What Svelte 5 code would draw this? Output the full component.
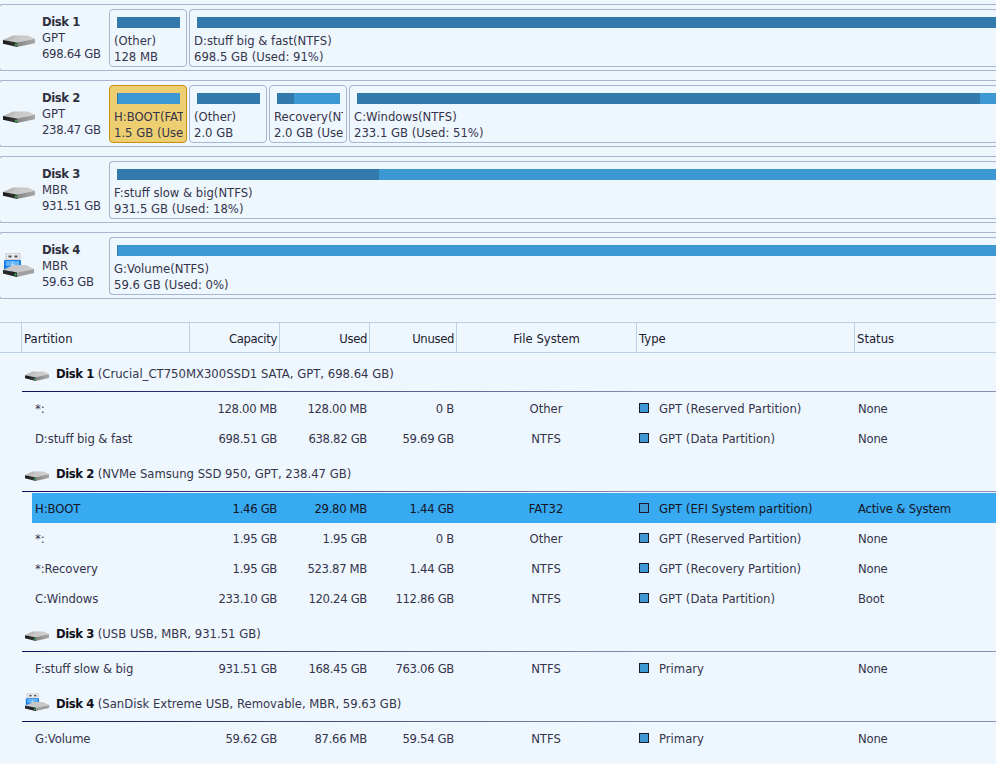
<script>
  const disks = [
    { name: 'Disk 1', scheme: 'GPT', size: '698.64 GB', usb: false, parts: [
      { grow: false, l1: '(Other)', l2: '128 MB', used: 100 },
      { grow: true, l1: 'D:stuff big & fast(NTFS)', l2: '698.5 GB (Used: 91%)', used: 100 }
    ]},
    { name: 'Disk 2', scheme: 'GPT', size: '238.47 GB', usb: false, parts: [
      { grow: false, sel: true, l1: 'H:BOOT(FAT32)', l2: '1.5 GB (Used: 2%)', px: 1 },
      { grow: false, l1: '(Other)', l2: '2.0 GB', used: 100 },
      { grow: false, l1: 'Recovery(NTFS)', l2: '2.0 GB (Used: 27%)', px: 17 },
      { grow: true, l1: 'C:Windows(NTFS)', l2: '233.1 GB (Used: 51%)', px: 623 }
    ]},
    { name: 'Disk 3', scheme: 'MBR', size: '931.51 GB', usb: false, parts: [
      { grow: true, l1: 'F:stuff slow & big(NTFS)', l2: '931.5 GB (Used: 18%)', px: 262 }
    ]},
    { name: 'Disk 4', scheme: 'MBR', size: '59.63 GB', usb: true, parts: [
      { grow: true, l1: 'G:Volume(NTFS)', l2: '59.6 GB (Used: 0%)', px: 1 }
    ]}
  ];
  const groups = [
    { name: 'Disk 1', info: '(Crucial_CT750MX300SSD1 SATA, GPT, 698.64 GB)', usb: false, rows: [
      ['*:', '128.00 MB', '128.00 MB', '0 B', 'Other', 'GPT (Reserved Partition)', 'None'],
      ['D:stuff big & fast', '698.51 GB', '638.82 GB', '59.69 GB', 'NTFS', 'GPT (Data Partition)', 'None']
    ]},
    { name: 'Disk 2', info: '(NVMe Samsung SSD 950, GPT, 238.47 GB)', usb: false, rows: [
      ['H:BOOT', '1.46 GB', '29.80 MB', '1.44 GB', 'FAT32', 'GPT (EFI System partition)', 'Active & System', true],
      ['*:', '1.95 GB', '1.95 GB', '0 B', 'Other', 'GPT (Reserved Partition)', 'None'],
      ['*:Recovery', '1.95 GB', '523.87 MB', '1.44 GB', 'NTFS', 'GPT (Recovery Partition)', 'None'],
      ['C:Windows', '233.10 GB', '120.24 GB', '112.86 GB', 'NTFS', 'GPT (Data Partition)', 'Boot']
    ]},
    { name: 'Disk 3', info: '(USB USB, MBR, 931.51 GB)', usb: false, rows: [
      ['F:stuff slow & big', '931.51 GB', '168.45 GB', '763.06 GB', 'NTFS', 'Primary', 'None']
    ]},
    { name: 'Disk 4', info: '(SanDisk Extreme USB, Removable, MBR, 59.63 GB)', usb: true, rows: [
      ['G:Volume', '59.62 GB', '87.66 MB', '59.54 GB', 'NTFS', 'Primary', 'None']
    ]}
  ];
</script>

{#snippet hdd(cls)}
  <svg class={cls} viewBox="0 0 32 13" preserveAspectRatio="none" aria-hidden="true">
    <defs>
      <linearGradient id="hddtop" x1="0" x2="1" y1="0" y2="0.3">
        <stop offset="0" stop-color="#a4a4a4" />
        <stop offset="0.5" stop-color="#c6c6c6" />
        <stop offset="1" stop-color="#d2d2d2" />
      </linearGradient>
      <linearGradient id="hddfront" x1="0" x2="1" y1="0" y2="0">
        <stop offset="0" stop-color="#161616" />
        <stop offset="0.42" stop-color="#3a3a3a" />
        <stop offset="0.47" stop-color="#888888" />
        <stop offset="1" stop-color="#a8a8a8" />
      </linearGradient>
    </defs>
    <polygon points="0,5.5 10,0.5 25,0.5 32,4 14,8" fill="url(#hddtop)" />
    <polygon points="0,5.5 14,8 32,4 32,9 14,13 0,9.5" fill="url(#hddfront)" />
    <rect x="12" y="9.5" width="2" height="2" fill="#2fc24f" />
  </svg>
{/snippet}

{#snippet usb(cls)}
  <svg class={cls} viewBox="0 0 32 24" preserveAspectRatio="none" aria-hidden="true">
    <rect x="3" y="0" width="14" height="7" rx="1" fill="#ebebef" stroke="#a6a6b0" stroke-width="0.6" />
    <rect x="5.5" y="2.5" width="3" height="2" fill="#555" />
    <rect x="11.5" y="2.5" width="3" height="2" fill="#555" />
    <rect x="1" y="7" width="17" height="12" rx="1" fill="#1c7ee8" />
    <rect x="3" y="8" width="13" height="5" fill="#62b3f6" />
    <path d="M9.5 8.5v7M7.5 11l2 1.5 2-1.5" stroke="#c4e2ff" stroke-width="0.8" fill="none" />
    <polygon points="0,17 10,12 23,12 31,16 14,19.5" fill="#c8c8c8" />
    <polygon points="0,17 14,19.5 31,16 31,20 14,24 0,20.5" fill="#a0a0a0" />
    <polygon points="0,17 14,19.5 14,24 0,20.5" fill="#262626" />
    <rect x="11.5" y="20.5" width="2" height="2" fill="#2fc24f" />
  </svg>
{/snippet}

<div class="page">
  <section class="map">
    {#each disks as d}
      <div class="disk">
        <div class="diskinfo">
          <span class="iconslot">
            {#if d.usb}{@render usb('mapusb')}{:else}{@render hdd('maphdd')}{/if}
          </span>
          <div class="disktext">
            <b>{d.name}</b>
            <span>{d.scheme}</span>
            <span class="size">{d.size}</span>
          </div>
        </div>
        <div class="parts">
          {#each d.parts as p}
            <div class="part" class:grow={p.grow} class:sel={p.sel}>
              <div class="bar">
                <div class="fill" style:width={p.px ? p.px + 'px' : p.used + '%'}></div>
              </div>
              <div class="ptext">{p.l1}</div>
              <div class="ptext">{p.l2}</div>
            </div>
          {/each}
        </div>
      </div>
    {/each}
  </section>

  <section class="table">
    <div class="thead cols">
      <div class="gutter"></div>
      <div class="th">Partition</div>
      <div class="th r">Capacity</div>
      <div class="th r">Used</div>
      <div class="th r">Unused</div>
      <div class="th c">File System</div>
      <div class="th">Type</div>
      <div class="th last">Status</div>
    </div>
    {#each groups as g}
      <div class="ghead">
        <span class="gicon">
          {#if g.usb}{@render usb('listusb')}{:else}{@render hdd('listhdd')}{/if}
        </span>
        <b>{g.name}</b>
        <span class="ginfo">{g.info}</span>
      </div>
      <div class="rows">
        {#each g.rows as r}
          <div class="row" class:selrow={r[7]}>
            <div class="td name">{r[0]}</div>
            <div class="td r">{r[1]}</div>
            <div class="td r">{r[2]}</div>
            <div class="td r">{r[3]}</div>
            <div class="td c">{r[4]}</div>
            <div class="td type"><i class="sq"></i>{r[5]}</div>
            <div class="td status">{r[6]}</div>
          </div>
        {/each}
      </div>
    {/each}
  </section>
</div>

<style>
  :global(body) {
    margin: 0;
    background: #eff7fe;
  }
  .page {
    width: 996px;
    height: 764px;
    overflow: hidden;
    background: #eff7fe;
    font-family: "DejaVu Sans", Tahoma, sans-serif;
    font-size: 11.65px;
    color: #34344c;
    line-height: 16px;
  }
  .map {
    padding-top: 4px;
    height: 322px;
    box-sizing: border-box;
  }
  .disk {
    display: flex;
    height: 67px;
    box-sizing: border-box;
    margin-bottom: 9px;
    border: 1px solid #a7b5d0;
    border-right: 0;
    border-radius: 3px 0 0 3px;
    margin-left: -1px;
  }
  .diskinfo {
    width: 109px;
    flex: none;
    position: relative;
  }
  .iconslot {
    position: absolute;
    left: 3px;
    top: 30px;
    display: block;
  }
  .maphdd {
    display: block;
    width: 32px;
    height: 12px;
  }
  .mapusb {
    display: block;
    width: 32px;
    height: 24px;
    margin-top: -10px;
  }
  .disktext {
    padding: 9px 0 0 42px;
    display: flex;
    flex-direction: column;
    white-space: nowrap;
  }
  .disktext b {
    font-weight: 700;
    color: #30303f;
    letter-spacing: -0.45px;
  }
  .disktext .size {
    letter-spacing: -0.3px;
  }
  .parts {
    display: flex;
    gap: 2px;
    flex: 1;
    min-width: 0;
    padding-top: 4px;
    height: 62px;
    box-sizing: border-box;
  }
  .part {
    width: 78px;
    height: 58px;
    box-sizing: border-box;
    flex: none;
    border: 1px solid #a7b5d0;
    border-radius: 4px;
    padding: 7px 3px 0 4px;
    overflow: hidden;
  }
  .part.grow {
    flex: 1;
    width: auto;
    min-width: 0;
    border-right: 0;
    border-radius: 4px 0 0 4px;
    padding-right: 0;
  }
  .part.sel {
    background: #edcf72;
    border-color: #c8900f;
  }
  .bar {
    height: 11px;
    margin: 0 3px 5px 3px;
    background: #3c97d3;
  }
  .grow .bar {
    margin-right: 0;
  }
  .fill {
    height: 100%;
    background: #337aac;
  }
  .ptext {
    white-space: nowrap;
    overflow: hidden;
    height: 16px;
  }
  .table {
    width: 996px;
  }
  .thead {
    display: flex;
    height: 31px;
    box-sizing: border-box;
    border-top: 1px solid #bcd0e4;
    border-bottom: 1px solid #bcd0e4;
    color: #202030;
  }
  .gutter {
    width: 22px;
    flex: none;
    border-right: 1px solid #bcd0e4;
    box-sizing: border-box;
  }
  .th {
    box-sizing: border-box;
    line-height: 32px;
    border-right: 1px solid #bcd0e4;
    padding: 0 2px;
    flex: none;
  }
  .th.r {
    letter-spacing: -0.35px;
  }
  .thead .th:nth-child(2) { width: 168px; }
  .thead .th:nth-child(3) { width: 90px; }
  .thead .th:nth-child(4) { width: 90px; }
  .thead .th:nth-child(5) { width: 87px; }
  .thead .th:nth-child(6) { width: 180px; }
  .thead .th:nth-child(7) { width: 218px; }
  .th.last {
    flex: 1;
    border-right: 0;
  }
  .r { text-align: right; }
  .c { text-align: center; }
  .ghead {
    height: 39px;
    box-sizing: border-box;
    margin-left: 22px;
    border-bottom: 1px solid;
    border-image: linear-gradient(90deg, #10105a, #8a8fb2 65%, #8a8fb2) 1;
    display: flex;
    align-items: center;
    padding-top: 3px;
    white-space: nowrap;
    color: #34344c;
  }
  .ghead b {
    color: #101018;
    margin-right: 4px;
    letter-spacing: -0.45px;
  }
  .gicon {
    width: 34px;
    flex: none;
    padding-left: 3px;
    box-sizing: border-box;
  }
  .listhdd {
    display: block;
    width: 24px;
    height: 10px;
    margin-top: 5px;
  }
  .listusb {
    display: block;
    width: 25px;
    height: 18px;
    margin-top: -3px;
  }
  .rows {
    padding-top: 1px;
  }
  .row {
    display: flex;
    height: 30px;
    line-height: 32px;
    margin-left: 32px;
    white-space: nowrap;
  }
  .selrow {
    background: #37aaf2;
    color: #14141e;
  }
  .td {
    box-sizing: border-box;
    flex: none;
    padding: 0 2px;
  }
  .td.name { width: 157px; padding-left: 3px; letter-spacing: -0.1px; }
  .td.r { letter-spacing: -0.32px; }
  .row .td:nth-child(2) { width: 90px; }
  .row .td:nth-child(3) { width: 90px; }
  .row .td:nth-child(4) { width: 87px; }
  .row .td:nth-child(5) { width: 180px; }
  .td.type {
    width: 218px;
    padding-left: 3px;
    padding-top: 1px;
    display: flex;
    align-items: center;
    line-height: 30px;
  }
  .td.status {
    padding-left: 4px;
    letter-spacing: -0.2px;
  }
  .sq {
    display: block;
    width: 10px;
    height: 10px;
    box-sizing: border-box;
    background: #3c97d3;
    border: 1px solid #1a1a2a;
    margin-right: 10px;
    margin-top: -1px;
  }
</style>
